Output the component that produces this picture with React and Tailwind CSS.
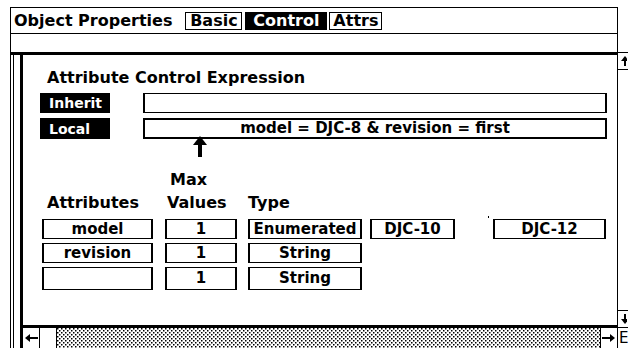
const rows = [
  { name: 'model', max: '1', type: 'Enumerated', values: ['DJC-10', 'DJC-12'], h: 'h-[20px]' },
  { name: 'revision', max: '1', type: 'String', values: [], h: 'h-[20px]' },
  { name: '', max: '1', type: 'String', values: [], h: 'h-[23px]' },
];

function Cell({ className = '', children }) {
  return (
    <div className={`flex items-center justify-center border-x-2 border-y border-black bg-white text-[15px] leading-none ${className}`}>
      {children}
    </div>
  );
}

function UpArrow() {
  return (
    <svg width="16" height="21" viewBox="0 0 16 21">
      <polygon points="8,0 15,9 1,9" fill="#000" />
      <rect x="6" y="8" width="4" height="13" fill="#000" />
    </svg>
  );
}

function ScrollArrow({ dir }) {
  return (
    <svg width="14" height="10" viewBox="0 0 14 10">
      {dir === 'left' ? (
        <>
          <polygon points="1,5 6,1 6,9" fill="#000" />
          <rect x="5" y="4" width="9" height="2" fill="#000" />
        </>
      ) : (
        <>
          <polygon points="13,5 8,1 8,9" fill="#000" />
          <rect x="0" y="4" width="9" height="2" fill="#000" />
        </>
      )}
    </svg>
  );
}

// vertical scroll arrow, cut off by the window edge
function VArrow({ dir }) {
  return (
    <svg width="8" height="12" viewBox="0 0 8 12">
      {dir === 'up' ? (
        <>
          <polygon points="6,1 2,6 10,6" fill="#000" />
          <rect x="5" y="5" width="2" height="6" fill="#000" />
        </>
      ) : (
        <>
          <polygon points="6,11 2,6 10,6" fill="#000" />
          <rect x="5" y="1" width="2" height="6" fill="#000" />
        </>
      )}
    </svg>
  );
}

export default function App() {
  return (
    <div className="w-[628px] h-[348px] overflow-hidden bg-white text-black font-['DejaVu_Sans',sans-serif] font-bold">
      <div className="flex h-full pt-[7px] pl-[10px]">
        {/* main window */}
        <div className="flex w-[608px] shrink-0 flex-col border-x border-t border-black">
          {/* title bar */}
          <div className="flex h-[26px] items-center border-b border-black pl-[3px]">
            <span className="text-[16px] leading-none">Object Properties</span>
            <div className="ml-[13px] flex h-[18px] items-center">
              <span className="flex h-full w-[57px] items-center justify-center border border-black text-[16px] leading-none">Basic</span>
              <span className="ml-[3px] flex h-full w-[82px] items-center justify-center bg-black text-[16px] leading-none text-white">Control</span>
              <span className="ml-[2px] flex h-full w-[53px] items-center justify-center border border-black text-[16px] leading-none">Attrs</span>
            </div>
          </div>
          <div className="h-[21px] border-b-[3px] border-black" />

          {/* body */}
          <div className="flex flex-1">
            <div className="w-[9px] shrink-0 pl-[2px]">
              <div className="h-full w-[1px] bg-black" />
            </div>
            <div className="flex flex-1 flex-col border-l-[3px] border-black">
              <div className="flex flex-1 flex-col border-b-[3px] border-black pl-[17px] pr-[10px]">
                <div className="ml-[7px] mt-[15px] text-[16px] leading-none">Attribute Control Expression</div>

                <div className="mt-[7px] flex h-[20px]">
                  <div className="flex w-[70px] items-center bg-black pl-[9px] text-[14px] leading-none text-white">Inherit</div>
                  <div className="ml-[33px] flex-1 border-x-2 border-y border-black" />
                </div>
                <div className="mt-[5px] flex h-[21px]">
                  <div className="flex w-[70px] items-center bg-black pl-[9px] text-[14px] leading-none text-white">Local</div>
                  <div className="ml-[33px] flex flex-1 items-center justify-center border-2 border-black text-[15px] leading-none">
                    model = DJC-8 &amp; revision = first
                  </div>
                </div>
                <div className="ml-[152px] mt-[-3px] flex">
                  <UpArrow />
                </div>

                <div className="ml-[130px] mt-[15px] text-[16px] leading-none">Max</div>
                <div className="mt-[7px] flex text-[16px] leading-none">
                  <span className="ml-[7px] w-[120px]">Attributes</span>
                  <span className="w-[81px]">Values</span>
                  <span>Type</span>
                </div>

                <div className="ml-[2px] mt-[8px] flex flex-col gap-[4px]">
                  {rows.map((r, i) => (
                    <div key={i} className={`flex ${r.h}`}>
                      <Cell className="w-[111px]">{r.name}</Cell>
                      <Cell className="ml-[12px] w-[72px]">{r.max}</Cell>
                      <Cell className="ml-[11px] w-[114px]">{r.type}</Cell>
                      {r.values.length > 0 && (
                        <>
                          <Cell className="ml-[8px] w-[85px] text-[14px]">{r.values[0]}</Cell>
                          <div className="ml-[33px] mr-[4px] mt-[-3px] h-[2px] w-[1px] bg-black" />
                          <Cell className="w-[113px] text-[14px]">{r.values[1]}</Cell>
                        </>
                      )}
                    </div>
                  ))}
                </div>
              </div>

              {/* horizontal scroll bar */}
              <div className="flex h-[20px]">
                <div className="flex w-[17px] items-center justify-center border-r border-black">
                  <ScrollArrow dir="left" />
                </div>
                <div className="w-[17px] border-r border-black" />
                <div className="flex-1">
                  <svg width="100%" height="100%">
                    <defs>
                      <pattern id="dots" width="4" height="4" patternUnits="userSpaceOnUse">
                        <rect x="0" y="0" width="1.5" height="1.5" fill="#000" />
                        <rect x="2" y="2" width="1.5" height="1.5" fill="#000" />
                      </pattern>
                    </defs>
                    <rect width="100%" height="100%" fill="url(#dots)" />
                  </svg>
                </div>
                <div className="flex w-[17px] items-center justify-center border-l border-black">
                  <ScrollArrow dir="right" />
                </div>
              </div>
            </div>
          </div>
        </div>

        {/* next column, cut off at the window edge */}
        <div className="flex w-[12px] shrink-0 flex-col">
          <div className="h-[45px]" />
          <div className="flex h-[18px] items-center border-y border-black pl-[1px]">
            <VArrow dir="up" />
          </div>
          <div className="flex-1" />
          <div className="flex h-[18px] items-center border-y border-black pl-[1px]">
            <VArrow dir="down" />
          </div>
          <div className="flex h-[20px] items-center pl-[1px] text-[15px] font-normal leading-none">E</div>
        </div>
      </div>
    </div>
  );
}
